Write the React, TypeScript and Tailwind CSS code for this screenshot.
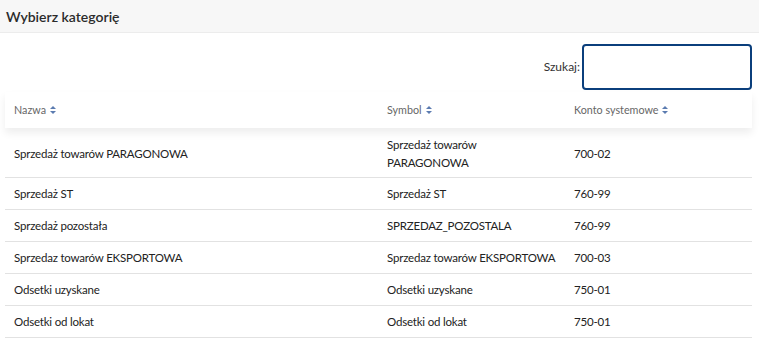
const rows = [
  { name: 'Sprzedaż towarów PARAGONOWA', symbol: 'Sprzedaż towarów\nPARAGONOWA', account: '700-02' },
  { name: 'Sprzedaż ST', symbol: 'Sprzedaż ST', account: '760-99' },
  { name: 'Sprzedaż pozostała', symbol: 'SPRZEDAZ_POZOSTALA', account: '760-99' },
  { name: 'Sprzedaz towarów EKSPORTOWA', symbol: 'Sprzedaz towarów EKSPORTOWA', account: '700-03' },
  { name: 'Odsetki uzyskane', symbol: 'Odsetki uzyskane', account: '750-01' },
  { name: 'Odsetki od lokat', symbol: 'Odsetki od lokat', account: '750-01' },
];

function SortIcon() {
  return (
    <svg width="6" height="8" viewBox="0 0 6 8" className="ml-[4px] inline-block">
      <path d="M3 0 L6 3 H0 Z" fill="#5b7bb0" />
      <path d="M3 8 L6 5 H0 Z" fill="#5b7bb0" />
    </svg>
  );
}

export default function App() {
  return (
    <div className="w-[759px] h-[348px] bg-white overflow-hidden font-['Lato',sans-serif] text-[#222]">
      {/* Title bar */}
      <div className="h-[33px] bg-[#f7f7f7] border-b border-[#ececec] flex items-center px-[6px]">
        <h2 className="text-[14px] font-semibold text-[#2b2b2b]">Wybierz kategorię</h2>
      </div>

      <div className="px-[5px] pr-[7px]">
        {/* Search */}
        <div className="flex justify-end items-center gap-[2px] mt-[11px]">
          <label className="text-[12px] text-[#333]">Szukaj:</label>
          <input className="w-[170px] h-[46px] border-2 border-[#0b3f7c] rounded-[4px] outline-none" />
        </div>

        {/* Header */}
        <div className="grid grid-cols-[373px_187px_1fr] h-[36px] mt-[2px] items-center bg-white shadow-[0_5px_8px_rgba(0,0,0,0.07)] text-[10.75px] text-[#666]">
          <div className="pl-[9px] flex items-center">Nazwa<SortIcon /></div>
          <div className="pl-[9px] flex items-center">Symbol<SortIcon /></div>
          <div className="pl-[9px] flex items-center">Konto systemowe<SortIcon /></div>
        </div>

        {/* Rows */}
        <div className="mt-[2px] text-[11.5px] tracking-[-0.2px] leading-[18px]">
          {rows.map((r, i) => (
            <div
              key={i}
              className={`grid grid-cols-[373px_187px_1fr] items-center border-b border-[#e2e2e2] ${i === 0 ? 'h-[48px]' : 'h-[32px]'}`}
            >
              <div className="pl-[9px]">{r.name}</div>
              <div className="pl-[9px] whitespace-pre">{r.symbol}</div>
              <div className="pl-[9px]">{r.account}</div>
            </div>
          ))}
        </div>
      </div>
    </div>
  );
}
